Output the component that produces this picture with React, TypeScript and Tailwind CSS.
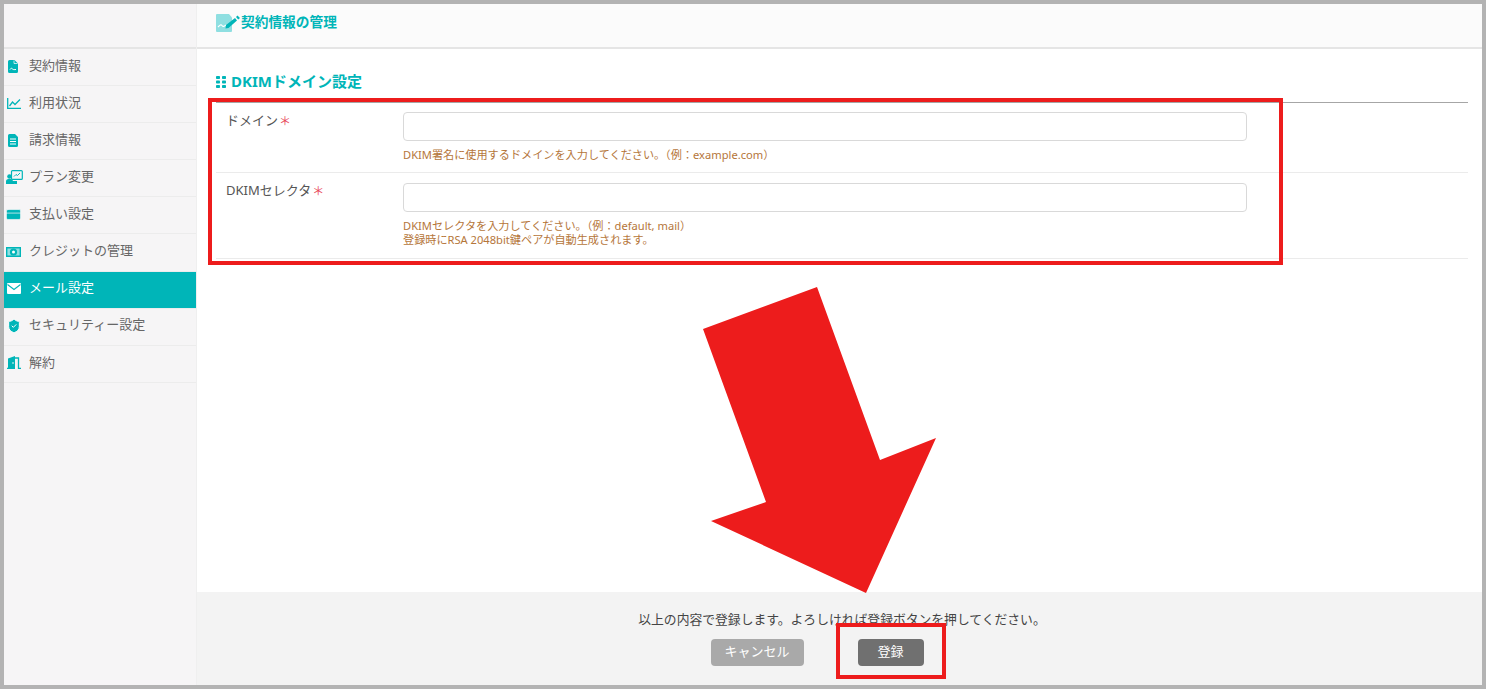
import React from 'react';
import { CreditCard, ShieldCheck } from 'lucide-react';

const teal = 'text-[#00b5b8]';

const ContractIcon = () => (
  <svg width="10" height="13" viewBox="0 0 10 13" className={teal}>
    <path fill="currentColor" d="M1.500 0H6.500L10 3.500v8A1.500 1.500 0 0 1 8.500 13h-7A1.500 1.500 0 0 1 0 11.500v-10A1.500 1.500 0 0 1 1.500 0z" />
    <path d="M6 .5v3h3.500" stroke="#fff" strokeWidth=".7" fill="none" />
    <path d="M2 9.500c1-1.500 1.500-1.500 2.500-.5s2 .5 3.500 .5" stroke="#fff" strokeWidth="1" fill="none" />
  </svg>
);

const ChartIcon = () => (
  <svg width="14" height="11" viewBox="0 0 14 11" fill="none" stroke="currentColor" className={teal}>
    <path d="M.7 0v10.300H14" strokeWidth="1.300" />
    <path d="M2.500 8l3-4 2.500 2.500L13 1.500" strokeWidth="1.300" />
  </svg>
);

const BillIcon = () => (
  <svg width="10" height="13" viewBox="0 0 10 13" className={teal}>
    <path fill="currentColor" d="M1.500 0H7l3 3v8.500A1.500 1.500 0 0 1 8.500 13h-7A1.500 1.500 0 0 1 0 11.500v-10A1.500 1.500 0 0 1 1.500 0z" />
    <path d="M2 5h6M2 7.500h6M2 10h6" stroke="#fff" strokeWidth="1" />
  </svg>
);

const PlanIcon = () => (
  <svg width="17" height="14" viewBox="0 0 17 14" className={teal}>
    <rect x="5.500" y=".6" width="10.800" height="8.800" rx="1" fill="none" stroke="currentColor" strokeWidth="1.200" />
    <path d="M8 6.500l2-2 1.500 1L14 3" stroke="currentColor" strokeWidth="1" fill="none" />
    <circle cx="3.500" cy="6.500" r="2.300" fill="currentColor" />
    <path fill="currentColor" d="M0 14v-2.500A2.500 2.500 0 0 1 2.500 9h2A2.500 2.500 0 0 1 7 11h4v3z" />
  </svg>
);

const CashIcon = () => (
  <svg width="15" height="12" viewBox="0 0 15 12" className={teal}>
    <path fill="#8fdfe1" d="M0 1h15v10H0z" />
    <path fill="none" stroke="currentColor" strokeWidth="1.400" d="M.7 1.700h13.600v8.600H.7z" />
    <circle cx="7.500" cy="6" r="3.600" fill="currentColor" />
    <circle cx="7.500" cy="6" r="1.500" fill="#fff" />
  </svg>
);

const DoorIcon = () => (
  <svg width="14" height="13" viewBox="0 0 14 13" className={teal}>
    <path fill="currentColor" d="M1 13V2.500L8 0v13z" />
    <path fill="none" stroke="currentColor" strokeWidth="1.300" d="M8 2h3.500v11M0 12.400h1M11.500 12.400h2.500" />
    <circle cx="6" cy="7" r=".8" fill="#fff" />
  </svg>
);

const MailIcon = () => (
  <svg width="14" height="11" viewBox="0 0 14 11">
    <rect width="14" height="11" rx="1" fill="#fff" />
    <path d="M.5 1.500L7 6.500l6.500-5" stroke="#00b5b8" strokeWidth="1.100" fill="none" />
  </svg>
);

const navItems = [
  { label: '契約情報', icon: <ContractIcon />, iconBox: 'pl-[4px]' },
  { label: '利用状況', icon: <ChartIcon />, iconBox: 'pl-[3px]' },
  { label: '請求情報', icon: <BillIcon />, iconBox: 'pl-[4px]' },
  { label: 'プラン変更', icon: <PlanIcon />, iconBox: 'pl-[2px]' },
  { label: '支払い設定', icon: <CreditCard size={17} fill="currentColor" stroke="#f6f5f6" strokeWidth={1} className={teal} />, iconBox: 'pl-[1px]' },
  { label: 'クレジットの管理', icon: <CashIcon />, iconBox: 'pl-[2px]' },
  { label: 'メール設定', icon: <MailIcon />, iconBox: 'pl-[3px]', active: true },
  { label: 'セキュリティー設定', icon: <ShieldCheck size={16} fill="currentColor" stroke="#fff" strokeWidth={1.500} className={teal} />, iconBox: 'pl-[2px]' },
  { label: '解約', icon: <DoorIcon />, iconBox: 'pl-[3px]' },
];

const Required = () => <span className="ml-[1px] align-[-1px] text-[12px] text-[#e8495a]">＊</span>;

const FormRow: React.FC<{ label: string; hints: string[]; rowClass: string; topClass: string }> = ({ label, hints, rowClass, topClass }) => (
  <div className={`flex border-b border-[#ebebeb] ${rowClass}`}>
    <div className={`w-[187px] shrink-0 pl-[10px] text-[13px] leading-5 text-[#555] ${topClass}`}>
      {label}
      <Required />
    </div>
    <div className="w-[844px] pt-[9px]">
      <input type="text" className="block h-[29px] w-full rounded border border-[#d9d9d9] bg-white" />
      <div className="mt-[7px] text-[11.150px] leading-[14px] text-[#b5763a]">
        {hints.map((h) => (
          <p key={h}>{h}</p>
        ))}
      </div>
    </div>
  </div>
);

export default function App() {
  return (
    <div
      className="relative flex h-[689px] w-[1486px] overflow-hidden border-4 border-[#b3b3b3] bg-white"
      style={{ fontFamily: '"Noto Sans", "Noto Sans CJK JP", sans-serif' }}
    >
      <aside className="w-[193px] shrink-0 border-r border-[#efefef] bg-[#f6f5f6]">
        <div className="h-[45px] border-b-2 border-[#e5e5e5]" />
        <nav>
          {navItems.map((item) => (
            <div
              key={item.label}
              className={`flex h-[37.100px] items-center border-b border-[#ececec] pb-[3px] text-[13px] ${
                item.active ? 'bg-[#00b5b8] text-white' : 'text-[#666]'
              }`}
            >
              <span className={`flex w-[25px] shrink-0 items-center pt-px ${item.iconBox}`}>{item.icon}</span>
              {item.label}
            </div>
          ))}
        </nav>
      </aside>

      <main className="flex min-w-0 flex-1 flex-col">
        <header className="flex h-[45px] shrink-0 items-center border-b-2 border-[#e5e5e5] bg-[#fbfbfb] pb-[6px] pl-[19px]">
          <svg width="25" height="18" viewBox="0 0 25 18" className={teal}>
            <path fill="#8fdfe1" d="M1 0h12l3 3.500V17a1 1 0 0 1-1 1H1a1 1 0 0 1-1-1V1a1 1 0 0 1 1-1z" />
            <path d="M2 13c2-2 3-3 4-1.500s2 1 4-.5" stroke="#fff" strokeWidth="1.200" fill="none" />
            <path fill="currentColor" d="M10 11l9-7 2 2.500-8.500 7.500-3 .5zM20 3l1.500-1.500 2.500 2.500-1.800 1.500z" />
          </svg>
          <h1 className={`text-[13.700px] font-bold ${teal}`}>契約情報の管理</h1>
        </header>

        <section className="flex-1 pl-[19px] pr-[14px] pt-[22px]">
          <h2 className={`flex items-center gap-[5px] text-[15px] font-bold leading-5 ${teal}`}>
            <svg width="10" height="12" viewBox="0 0 10 12" fill="currentColor" className="mt-[1px]">
              <rect width="4" height="3" rx=".8" />
              <rect x="6" width="4" height="3" rx=".8" />
              <rect y="4.500" width="4" height="3" rx=".8" />
              <rect x="6" y="4.500" width="4" height="3" rx=".8" />
              <rect y="9" width="4" height="3" rx=".8" />
              <rect x="6" y="9" width="4" height="3" rx=".8" />
            </svg>
            DKIMドメイン設定
          </h2>
          <div className="mt-[11px] border-t border-[#a6a6a6]">
            <FormRow
              label="ドメイン"
              rowClass="h-[70px]"
              topClass="pt-[7px]"
              hints={['DKIM署名に使用するドメインを入力してください。（例：example.com）']}
            />
            <div className="pt-px">
              <FormRow
                label="DKIMセレクタ"
                rowClass="h-[85px]"
                topClass="pt-[6px]"
                hints={['DKIMセレクタを入力してください。（例：default, mail）', '登録時にRSA 2048bit鍵ペアが自動生成されます。']}
              />
            </div>
          </div>
        </section>

        <footer className="flex h-[93px] shrink-0 flex-col items-center bg-[#f3f3f3] pt-[18px]">
          <p className="pl-[5px] text-[12.800px] leading-[18px] text-[#444]">以上の内容で登録します。よろしければ登録ボタンを押してください。</p>
          <div className="mr-[45px] mt-[11px] flex gap-[54px]">
            <button className="h-[27px] w-[93px] rounded-sm bg-[#a9a9a9] pb-[2px] text-[13px] text-white">キャンセル</button>
            <button className="h-[27px] w-[66px] rounded-sm bg-[#707070] pb-[2px] text-[13px] text-white">登録</button>
          </div>
        </footer>
      </main>

      {/* annotations drawn over the screenshot */}
      <div className="absolute left-[204px] top-[94px] h-[167px] w-[1075px] border-4 border-[#ed1c1c]" />
      <div className="absolute left-[832px] top-[619px] h-[56px] w-[110px] border-4 border-[#ed1c1c]" />
      <svg className="absolute left-[699px] top-[283px]" width="240" height="310" viewBox="699 283 240 310">
        <polygon fill="#ed1c1c" points="813,283 876,456 932,434 862,589 707,517 762,498 699,325" />
      </svg>
    </div>
  );
}
